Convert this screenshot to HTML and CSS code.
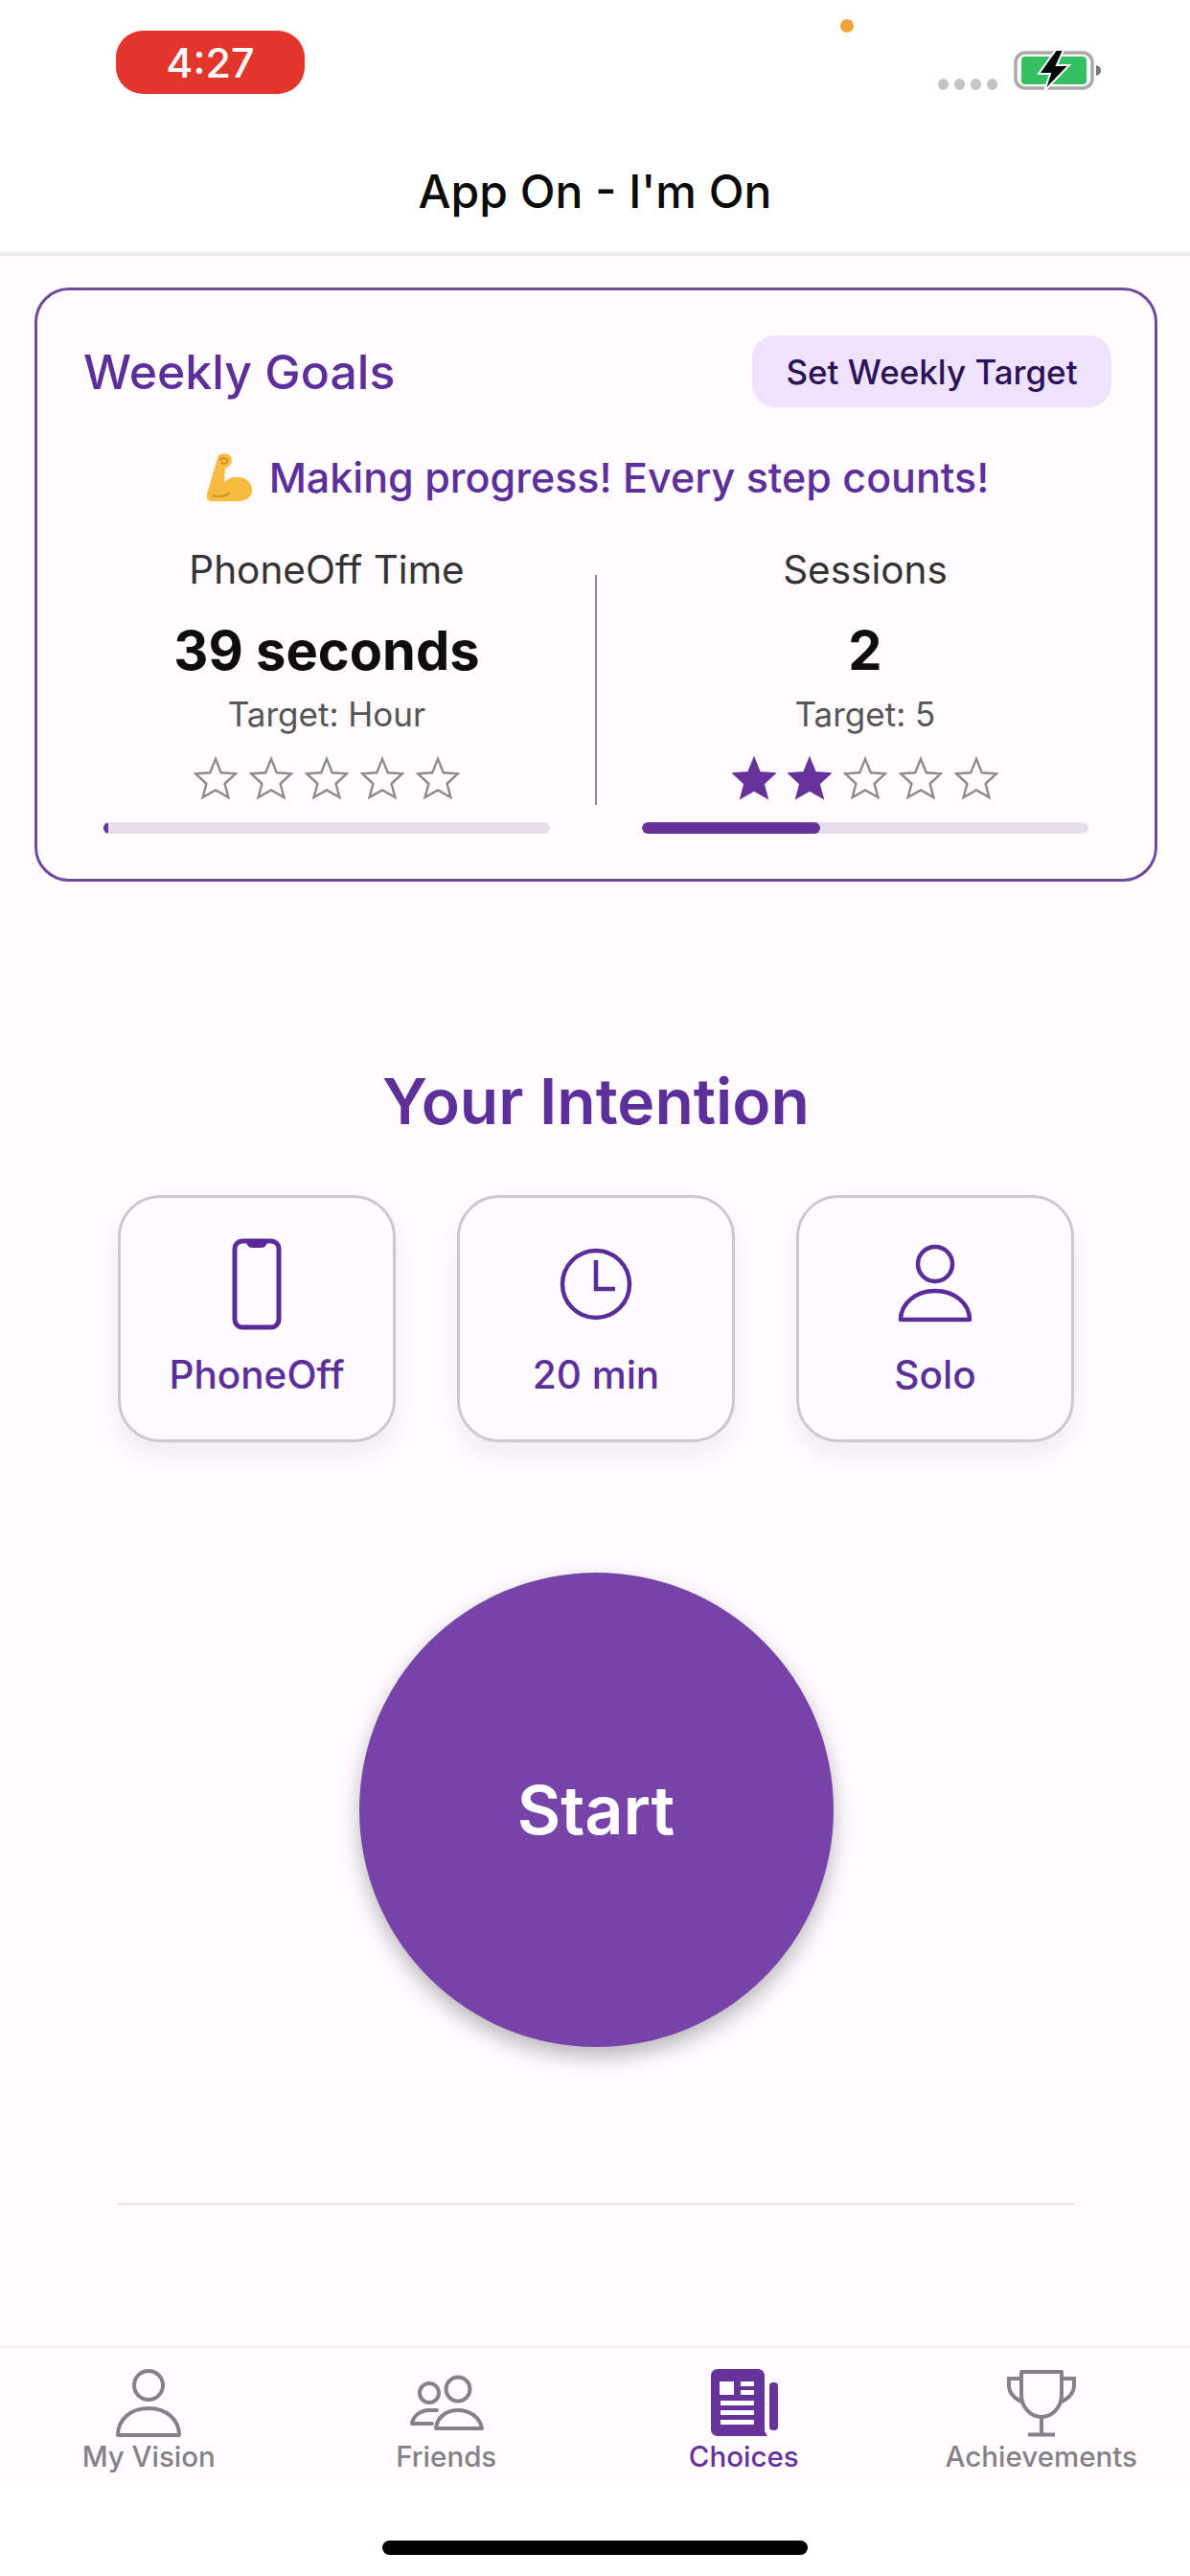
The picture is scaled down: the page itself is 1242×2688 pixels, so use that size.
FILE: index.html
```html
<!DOCTYPE html>
<html lang="en">
<head>
    <meta charset="UTF-8">
    <meta name="viewport" content="width=device-width, initial-scale=1.0">
    <title>App On - I'm On</title>
    <link rel="stylesheet" href="styles.css">
</head>
<body>
    <svg class="defs" width="0" height="0">
        <symbol id="star" viewBox="0 0 48 48">
            <path d="M24 3 L30 18 L46 19 L34 30 L38 45 L24 37 L10 45 L14 30 L2 19 L18 18 Z"/>
        </symbol>
    </svg>
    <div class="screen">
        <header class="top-bar">
            <span class="mic-dot"></span>
            <div class="status">
                <span class="clock-pill">4:27</span>
                <div class="status-right">
                    <div class="signal"><i></i><i></i><i></i><i></i></div>
                    <svg class="battery" width="92" height="43" viewBox="0 0 92 43">
                        <rect x="2" y="3" width="80" height="37" rx="10" fill="none" stroke="#a9aaa9" stroke-width="3.500"/>
                        <rect x="8" y="7" width="68" height="29" rx="4" fill="#35c163"/>
                        <path d="M86 16 C90 17 91 19 91 21.500 C91 24 90 26 86 27 Z" fill="#77777a"/>
                        <path d="M44 0 L26 25 L38 25 L32 43 L58 16 L45 16 L52 0 Z" fill="#050505" stroke="#fff" stroke-width="2"/>
                    </svg>
                </div>
            </div>
            <h1 class="page-title">App On - I'm On</h1>
        </header>

        <main class="content">
            <section class="goals-card">
                <div class="goals-head">
                    <h2 class="goals-title">Weekly Goals</h2>
                    <button class="target-btn">Set Weekly Target</button>
                </div>
                <p class="goals-msg">
                    <svg class="arm" width="50" height="51" viewBox="0 0 50 51">
                        <path d="M13 2 C18 -1 27 0 27 7 C27 13 22 14 20 16 L19 30 C24 25 30 24 35 25 C43 26 49 32 48 40 C47 47 40 50 32 50 L7 50 C2 50 0 47 1 43 L9 15 Z" fill="#f6bb3f"/>
                        <path d="M14 8 C16 4 23 4 22 9 C21 11 18 11 16 10 M7 44 C14 46 20 45 25 41" fill="none" stroke="#d08f24" stroke-width="2"/>
                    </svg>
                    Making progress! Every step counts!
                </p>
                <div class="stats">
                    <div class="stat">
                        <div class="stat-label">PhoneOff Time</div>
                        <div class="stat-value">39 seconds</div>
                        <div class="stat-target">Target: Hour</div>
                        <div class="stars">
                            <svg class="star"><use href="#star"/></svg>
                            <svg class="star"><use href="#star"/></svg>
                            <svg class="star"><use href="#star"/></svg>
                            <svg class="star"><use href="#star"/></svg>
                            <svg class="star"><use href="#star"/></svg>
                        </div>
                        <div class="bar"><div class="bar-fill" style="width: 1%"></div></div>
                    </div>
                    <div class="stats-divider"></div>
                    <div class="stat">
                        <div class="stat-label">Sessions</div>
                        <div class="stat-value">2</div>
                        <div class="stat-target">Target: 5</div>
                        <div class="stars">
                            <svg class="star on"><use href="#star"/></svg>
                            <svg class="star on"><use href="#star"/></svg>
                            <svg class="star"><use href="#star"/></svg>
                            <svg class="star"><use href="#star"/></svg>
                            <svg class="star"><use href="#star"/></svg>
                        </div>
                        <div class="bar"><div class="bar-fill" style="width: 40%"></div></div>
                    </div>
                </div>
            </section>

            <h2 class="intention-title">Your Intention</h2>
            <div class="tiles">
                <div class="tile">
                    <div class="tile-icon">
                        <svg width="52" height="96" viewBox="0 0 52 96" fill="none" stroke="#5a2c9a" stroke-width="5">
                            <rect x="3" y="3" width="46" height="90" rx="8"/>
                            <path d="M15 4 H37 C36 9 33 10 30 10 H22 C19 10 16 9 15 4 Z" fill="#5a2c9a" stroke="none"/>
                        </svg>
                    </div>
                    <div class="tile-label">PhoneOff</div>
                </div>
                <div class="tile">
                    <div class="tile-icon">
                        <svg width="76" height="76" viewBox="0 0 76 76" fill="none" stroke="#5a2c9a" stroke-width="4.500">
                            <circle cx="38" cy="38" r="35"/>
                            <path d="M38 13 V43 H58"/>
                        </svg>
                    </div>
                    <div class="tile-label">20 min</div>
                </div>
                <div class="tile">
                    <div class="tile-icon">
                        <svg width="78" height="84" viewBox="0 0 78 84" fill="none" stroke="#5a2c9a" stroke-width="4.500" stroke-linejoin="round">
                            <circle cx="39" cy="21" r="18"/>
                            <path d="M3 79 C3 62 19 49 39 49 C59 49 75 62 75 79 Z"/>
                        </svg>
                    </div>
                    <div class="tile-label">Solo</div>
                </div>
            </div>

            <button class="start-btn">Start</button>
            <div class="content-line"></div>
        </main>

        <nav class="tab-bar">
            <div class="tab">
                <div class="tab-icon">
                    <svg width="70" height="72" viewBox="0 0 70 72" fill="none" stroke="#858287" stroke-width="4">
                        <circle cx="35" cy="18" r="15"/>
                        <path d="M3 70 C3 54 16 42 35 42 C54 42 67 54 67 70 Z" stroke-linejoin="round"/>
                    </svg>
                </div>
                <span class="tab-label">My Vision</span>
            </div>
            <div class="tab">
                <div class="tab-icon">
                    <svg width="80" height="58" viewBox="0 0 80 58" fill="none" stroke="#858287" stroke-width="4" stroke-linejoin="round" stroke-linecap="round">
                        <circle cx="52" cy="15" r="12.500"/>
                        <circle cx="22" cy="19" r="10"/>
                        <path d="M29 56 C30 45 39 37 52 37 C65 37 75 45 77 56 Z"/>
                        <path d="M25 51 H4 C5 43 13 37 22 37 H30"/>
                    </svg>
                </div>
                <span class="tab-label">Friends</span>
            </div>
            <div class="tab active">
                <div class="tab-icon">
                    <svg width="72" height="72" viewBox="0 0 72 72">
                        <path d="M9 1 H51 C55 1 58 4 58 8 V66 L61 71 H9 C5 71 2 68 2 64 V8 C2 4 5 1 9 1 Z" fill="#653399"/>
                        <rect x="63" y="15" width="9" height="50" rx="4" fill="#653399"/>
                        <g fill="#fefbff">
                            <rect x="11" y="14" width="15" height="14"/>
                            <rect x="33" y="14" width="14" height="5"/>
                            <rect x="33" y="23" width="14" height="5"/>
                            <rect x="12" y="34" width="35" height="5"/>
                            <rect x="12" y="44" width="35" height="5"/>
                            <rect x="12" y="54" width="35" height="5"/>
                        </g>
                    </svg>
                </div>
                <span class="tab-label">Choices</span>
            </div>
            <div class="tab">
                <div class="tab-icon">
                    <svg width="72" height="72" viewBox="0 0 72 72" fill="none" stroke="#858287" stroke-width="4">
                        <path d="M15 4 H57 V28 C57 41 47 51 36 51 C25 51 15 41 15 28 Z" stroke-linejoin="round"/>
                        <path d="M15 11 H2 V18 C2 26 8 32 17 36 M57 11 H70 V18 C70 26 64 32 55 36"/>
                        <path d="M36 51 V69 M22 69.500 H50"/>
                    </svg>
                </div>
                <span class="tab-label">Achievements</span>
            </div>
        </nav>
        <div class="home-area"><span class="home-bar"></span></div>
    </div>
</body>
</html>
```

FILE: styles.css
```css
* {
    box-sizing: border-box;
}
body {
    margin: 0;
    font-family: Inter, "Liberation Sans", sans-serif;
    background-color: #fff;
}
h1, h2, p {
    margin: 0;
}
.defs {
    position: absolute;
}
.screen {
    width: 1242px;
    height: 2688px;
    display: flex;
    flex-direction: column;
    overflow: hidden;
}

/* top bar */
.top-bar {
    position: relative;
    height: 267px;
    flex-shrink: 0;
    padding-top: 32px;
    background-color: #fff;
    border-bottom: 4px solid #eeeced;
}
.mic-dot {
    position: absolute;
    left: 877px;
    top: 20px;
    width: 14px;
    height: 14px;
    border-radius: 50%;
    background-color: #f2a23a;
}
.status {
    display: flex;
    justify-content: space-between;
    align-items: flex-start;
    height: 66px;
    padding: 0 92px 0 121px;
}
.clock-pill {
    width: 197px;
    height: 66px;
    border-radius: 28px;
    background-color: #e2352c;
    color: #fff;
    font-size: 43px;
    font-weight: 500;
    line-height: 66px;
    text-align: center;
}
.status-right {
    display: flex;
    align-items: flex-end;
    gap: 17px;
    margin-top: 20px;
}
.signal {
    display: flex;
    gap: 6px;
    padding-bottom: 1px;
}
.signal i {
    width: 11px;
    height: 12px;
    border-radius: 50%;
    background-color: #c4c4c4;
}
.page-title {
    margin-top: 72px;
    color: #0b0b0b;
    font-size: 48px;
    font-weight: 500;
    line-height: 60px;
    text-align: center;
}

/* page body */
.content {
    flex: 1;
    padding: 33px 34px 0 36px;
    background-color: #fffbff;
}
.goals-card {
    height: 620px;
    padding: 47px 45px 0 48px;
    border: 3px solid #6f4a9e;
    border-radius: 36px;
}
.goals-head {
    display: flex;
    justify-content: space-between;
    align-items: center;
    height: 75px;
}
.goals-title {
    color: #5c2f9b;
    font-size: 50px;
    font-weight: 500;
}
.target-btn {
    width: 375px;
    height: 75px;
    border: none;
    border-radius: 24px;
    background-color: #efe2fc;
    color: #2c1259;
    font-family: inherit;
    font-size: 35px;
    font-weight: 500;
}
.goals-msg {
    display: flex;
    justify-content: center;
    align-items: center;
    gap: 16px;
    height: 60px;
    margin-top: 43px;
    color: #5c2f9b;
    font-size: 43px;
    font-weight: 500;
}
.stats {
    display: grid;
    grid-template-columns: 466px 2px 466px;
    column-gap: 47px;
    margin: 42px 0 0 21px;
}
.stats-divider {
    height: 240px;
    margin-top: 30px;
    background-color: #8c8991;
}
.stat {
    display: flex;
    flex-direction: column;
    align-items: center;
}
.stat-label {
    color: #333;
    font-size: 40.500px;
    line-height: 50px;
}
.stat-value {
    margin-top: 24px;
    color: #0d0d0d;
    font-size: 56px;
    font-weight: 700;
    line-height: 70px;
}
.stat-target {
    margin-top: 9px;
    color: #555;
    font-size: 35px;
    line-height: 44px;
}
.stars {
    display: flex;
    gap: 12px;
    margin-top: 22px;
}
.star {
    width: 46px;
    height: 46px;
    fill: none;
    stroke: #8b8b8b;
    stroke-width: 2.500;
}
.star.on {
    fill: #653399;
    stroke: #653399;
}
.bar {
    width: 100%;
    height: 12px;
    margin-top: 23px;
    border-radius: 6px;
    background-color: #e6dfea;
    overflow: hidden;
}
.bar-fill {
    height: 100%;
    border-radius: 6px;
    background-color: #653399;
}

/* intention */
.intention-title {
    margin-top: 189px;
    color: #5c2f9b;
    font-size: 66px;
    font-weight: 600;
    line-height: 80px;
    text-align: center;
}
.tiles {
    display: flex;
    gap: 64px;
    margin: 58px 87px 0;
}
.tile {
    display: flex;
    flex-direction: column;
    align-items: center;
    width: 290px;
    height: 258px;
    padding-top: 40px;
    border: 3px solid #cdc8d0;
    border-radius: 44px;
    background-color: #fefbff;
    box-shadow: 0 14px 26px rgba(60, 30, 90, 0.07);
}
.tile-icon {
    display: flex;
    justify-content: center;
    align-items: center;
    height: 100px;
}
.tile-label {
    margin-top: 20px;
    color: #5c2f9b;
    font-size: 40.500px;
    font-weight: 500;
    line-height: 50px;
}
.start-btn {
    display: block;
    width: 495px;
    height: 495px;
    margin: 136px auto 0;
    border: none;
    border-radius: 50%;
    background-color: #7843a9;
    box-shadow: 0 10px 22px rgba(0, 0, 0, 0.28);
    color: #fff;
    font-family: inherit;
    font-size: 70px;
    font-weight: 600;
}
.content-line {
    height: 2px;
    margin: 163px 87px 0;
    background-color: #e4e0e6;
}

/* tabs */
.tab-bar {
    display: grid;
    grid-template-columns: repeat(4, 1fr);
    height: 142px;
    flex-shrink: 0;
    padding-top: 21px;
    background-color: #fffbff;
    border-top: 2px solid #f1edf2;
}
.tab {
    display: flex;
    flex-direction: column;
    align-items: center;
    color: #858287;
}
.tab.active {
    color: #653399;
}
.tab-icon {
    display: flex;
    justify-content: center;
    align-items: center;
    height: 72px;
}
.tab-label {
    font-size: 29.500px;
    font-weight: 500;
    line-height: 40px;
}
.home-area {
    display: flex;
    justify-content: center;
    height: 98px;
    flex-shrink: 0;
    padding-top: 61px;
    background-color: #fff;
}
.home-bar {
    width: 444px;
    height: 15px;
    border-radius: 8px;
    background-color: #000;
}
```
